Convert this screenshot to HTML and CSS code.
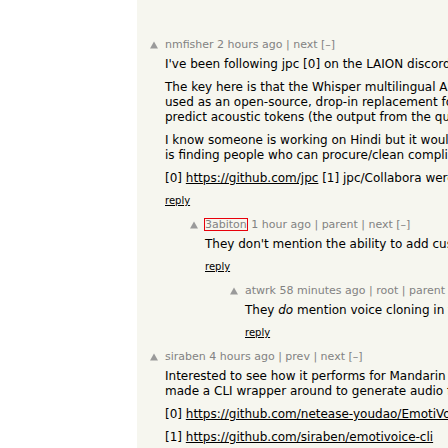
FILE: index.html
```html
<!DOCTYPE html>
<html>
<head>
<meta charset="utf-8">
<link rel="stylesheet" href="styles.css">
</head>
<body>
<div class="page">
  <div class="thread">
    <div class="comment lvl0">
      <div class="vote"><svg width="10" height="10" viewBox="0 0 10 10"><polygon points="5,1.5 9,8.5 1,8.5" fill="#9a9a9a"/></svg></div>
      <div class="body">
        <div class="head"><a class="user">nmfisher</a> <a>2 hours ago</a> | <a>next</a> [–]</div>
        <div class="text">
          <p>I've been following jpc [0] on the LAION discord since he started working on this, and it has been great to watch.</p>
          <p>The key here is that the Whisper multilingual ASR model is trained on a huge amount of data, so the encoder can be<br>used as an open-source, drop-in replacement for the semantic token model, and then a second model is trained to<br>predict acoustic tokens (the output from the quantized EnCodec model) from those semantic tokens.</p>
          <p>I know someone is working on Hindi but it would be great to see more languages. The main bottleneck<br>is finding people who can procure/clean compliant datasets for their own language.</p>
          <p>[0] <a class="link">https://github.com/jpc</a> [1] jpc/Collabora were very generous with their time.</p>
        </div>
        <div class="reply"><a>reply</a></div>
      </div>
    </div>
    <div class="comment lvl1">
      <div class="vote"><svg width="10" height="10" viewBox="0 0 10 10"><polygon points="5,1.5 9,8.5 1,8.5" fill="#9a9a9a"/></svg></div>
      <div class="body">
        <div class="head"><a class="user marked">3abiton</a> <a>1 hour ago</a> | <a>parent</a> | <a>next</a> [–]</div>
        <div class="text">
          <p>They don't mention the ability to add custom voices though, which is what I was looking for.</p>
        </div>
        <div class="reply"><a>reply</a></div>
      </div>
    </div>
    <div class="comment lvl2">
      <div class="vote"><svg width="10" height="10" viewBox="0 0 10 10"><polygon points="5,1.5 9,8.5 1,8.5" fill="#9a9a9a"/></svg></div>
      <div class="body">
        <div class="head"><a class="user">atwrk</a> <a>58 minutes ago</a> | <a>root</a> | <a>parent</a> | <a>next</a> [–]</div>
        <div class="text">
          <p>They <i>do</i> mention voice cloning in the roadmap section of the readme.</p>
        </div>
        <div class="reply"><a>reply</a></div>
      </div>
    </div>
    <div class="comment lvl0">
      <div class="vote"><svg width="10" height="10" viewBox="0 0 10 10"><polygon points="5,1.5 9,8.5 1,8.5" fill="#9a9a9a"/></svg></div>
      <div class="body">
        <div class="head"><a class="user">siraben</a> <a>4 hours ago</a> | <a>prev</a> | <a>next</a> [–]</div>
        <div class="text">
          <p>Interested to see how it performs for Mandarin Chinese speech synthesis, especially with prosody. I<br>made a CLI wrapper around to generate audio from the command line [1].</p>
          <p>[0] <a class="link">https://github.com/netease-youdao/EmotiVoice</a></p>
          <p>[1] <a class="link">https://github.com/siraben/emotivoice-cli</a></p>
        </div>
      </div>
    </div>
  </div>
</div>
</body>
</html>
```
FILE: styles.css
```css
html, body {
  margin: 0;
  padding: 0;
  overflow: hidden;
  background: #ffffff;
  width: 448px;
  height: 448px;
}

.page {
  margin-left: 137px;
  width: 900px;
  height: 448px;
  background: #f6f6ef;
  font-family: "DejaVu Sans", Verdana, sans-serif;
  overflow: hidden;
}

.thread {
  padding-top: 37px;
  padding-left: 13px;
  display: flex;
  flex-direction: column;
  gap: 9px;
}

.comment {
  display: flex;
  align-items: flex-start;
}

.lvl1 { padding-left: 40px; }
.lvl2 { padding-left: 80px; }

.vote {
  width: 15px;
  flex: none;
  height: 15px;
  display: flex;
  align-items: center;
}

.vote svg { display: block; margin-left: -1px; }

.body { flex: none; }

.head {
  font-size: 11px;
  line-height: 15px;
  color: #828282;
  white-space: nowrap;
}

.head a { color: #828282; }

.user.marked {
  display: inline-block;
  line-height: 11px;
  margin-right: 1px;
  outline: 1px solid #e8000b;
  outline-offset: 0;
}

.text {
  margin-top: 5px;
  font-size: 12px;
  line-height: 15px;
  color: #000000;
  white-space: nowrap;
}

.text p { margin: 0 0 8px 0; }
.text p:last-child { margin-bottom: 0; }

.link {
  color: #000000;
  text-decoration: underline;
}

.reply {
  margin-top: 7px;
  font-size: 10px;
  line-height: 15px;
}

.reply a {
  color: #000000;
  text-decoration: underline;
}
```
